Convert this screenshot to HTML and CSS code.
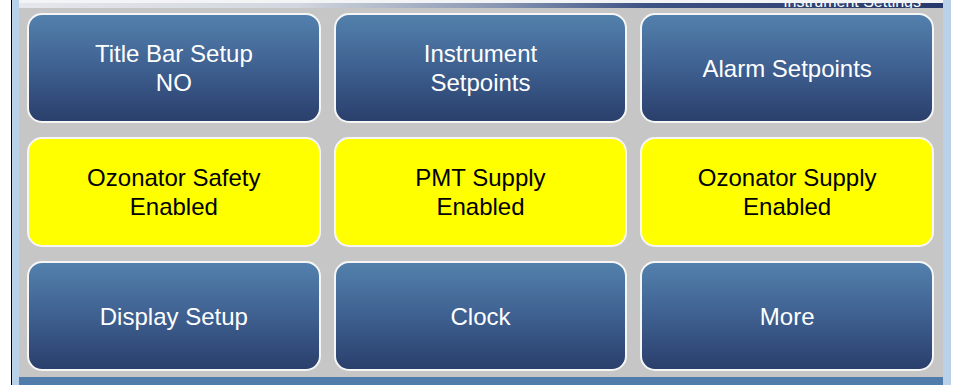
FILE: index.html
```html
<!DOCTYPE html>
<html lang="en">
<head>
    <meta charset="UTF-8">
    <meta name="viewport" content="width=device-width, initial-scale=1.0">
    <title>Instrument Settings</title>
    <link rel="stylesheet" href="styles.css">
</head>
<body>
    <div class="frame">
        <div class="panel">
            <div class="title-bar"><span>Instrument Settings</span></div>
            <div class="menu">
                <button class="tile">Title Bar Setup<br>NO</button>
                <button class="tile">Instrument<br>Setpoints</button>
                <button class="tile">Alarm Setpoints</button>

                <button class="tile warn">Ozonator Safety<br>Enabled</button>
                <button class="tile warn">PMT Supply<br>Enabled</button>
                <button class="tile warn">Ozonator Supply<br>Enabled</button>

                <button class="tile">Display Setup</button>
                <button class="tile">Clock</button>
                <button class="tile">More</button>
            </div>
        </div>
        <div class="status-bar"></div>
    </div>
</body>
</html>
```
FILE: styles.css
```css
body {
    margin: 0;
    background-color: #fff;
    font-family: "Liberation Sans", Arial, sans-serif;
}

.frame {
    margin-left: 11px;
    width: 924px;
    height: 385px;
    border-left: 1px solid #000;
    background-color: #b9d2ea;
    padding: 0 8px 0 7px;
    display: flex;
    flex-direction: column;
}

.panel {
    flex: 1;
    background-color: #c6c6c6;
    border-top: 3px solid #f2f4f6;
    display: flex;
    flex-direction: column;
}

.title-bar {
    height: 5px;
    overflow: hidden;
    display: flex;
    justify-content: flex-end;
    align-items: flex-end;
    background: linear-gradient(to right, #e4e7ec 0%, #d2d6de 30%, #8796b2 52%, #3c5282 68%, #27396a 100%);
}

.title-bar span {
    color: #fff;
    font-size: 16px;
    line-height: 12px;
    padding-right: 22px;
    white-space: nowrap;
}

.menu {
    display: grid;
    grid-template-columns: repeat(3, 1fr);
    grid-template-rows: repeat(3, 110px);
    gap: 14px 13px;
    padding: 5px 9px 6px 8px;
}

.tile {
    margin: 0;
    padding: 0;
    border: 2px solid #f6f6f6;
    border-radius: 15px;
    background: linear-gradient(to bottom, #5380ac 0%, #3e6090 50%, #2a3f6c 100%);
    color: #fff;
    font-family: "Liberation Sans", Arial, sans-serif;
    font-size: 24px;
    line-height: 29px;
    text-align: center;
    cursor: pointer;
}

.tile.warn {
    background: #ffff00;
    color: #000;
}

.status-bar {
    height: 8px;
    background-color: #4f7cab;
}
```
